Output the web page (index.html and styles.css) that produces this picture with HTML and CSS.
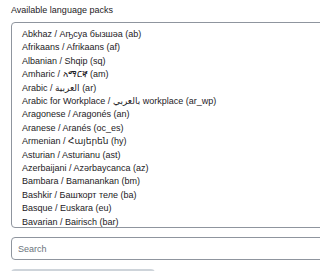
FILE: index.html
```
<!doctype html>
<html>
<head>
  <meta charset="utf-8">
  <title>Language packs</title>
  <link rel="stylesheet" href="styles.css">
</head>
<body>

  <div class="packs">
    <label class="packs-label" for="packs-list">Available language packs</label>

    <div class="packs-list" id="packs-list">
      <div class="pack">Abkhaz / Аҧсуа бызшәа (ab)</div>
      <div class="pack">Afrikaans / Afrikaans (af)</div>
      <div class="pack">Albanian / Shqip (sq)</div>
      <div class="pack">Amharic / አማርኛ (am)</div>
      <div class="pack">Arabic / العربية (ar)</div>
      <div class="pack">Arabic for Workplace / بالعربي workplace (ar_wp)</div>
      <div class="pack">Aragonese / Aragonés (an)</div>
      <div class="pack">Aranese / Aranés (oc_es)</div>
      <div class="pack">Armenian / Հայերեն (hy)</div>
      <div class="pack">Asturian / Asturianu (ast)</div>
      <div class="pack">Azerbaijani / Azərbaycanca (az)</div>
      <div class="pack">Bambara / Bamanankan (bm)</div>
      <div class="pack">Bashkir / Башҡорт теле (ba)</div>
      <div class="pack">Basque / Euskara (eu)</div>
      <div class="pack">Bavarian / Bairisch (bar)</div>
      <div class="pack">Belarusian / Беларуская (be)</div>
    </div>

    <input class="packs-search" type="text" placeholder="Search">

    <div class="packs-button"></div>
  </div>

</body>
</html>
```

FILE: styles.css
```
html, body {
  margin: 0;
  height: 100%;
  overflow: hidden;
  background: #fff;
}

body {
  font-family: "Liberation Sans", Arial, "DejaVu Sans", sans-serif;
  font-size: 9px;
  color: #1d2125;
}

.packs {
  display: flex;
  flex-direction: column;
  padding: 5px 0 0 11px;
  width: 330px;
}

.packs-label {
  line-height: 11px;
  margin-bottom: 6px;
}

.packs-list {
  height: 199px;
  border: 1px solid #8f959e;
  border-radius: 4px;
  padding: 5px 0 0 10px;
  overflow: hidden;
}

.pack {
  line-height: 13.4px;
  white-space: nowrap;
}

.packs-search {
  margin-top: 9px;
  box-sizing: border-box;
  height: 23px;
  border: 1px solid #8f959e;
  border-radius: 4px;
  padding: 0 6px;
  font: inherit;
  color: #1d2125;
}

.packs-search::placeholder {
  color: #6a737b;
}

.packs-button {
  margin-top: 9px;
  width: 144px;
  height: 20px;
  background: #ced4da;
  border-radius: 4px;
}
```
